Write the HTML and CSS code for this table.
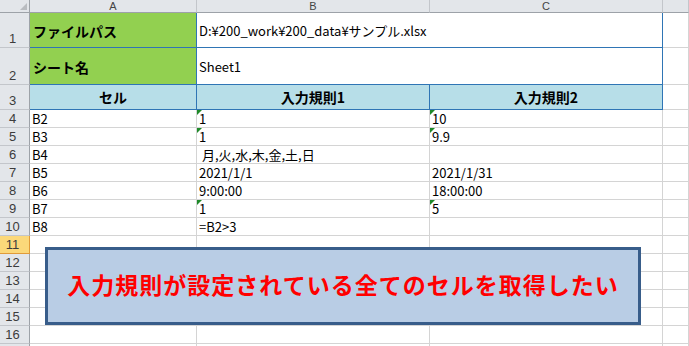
FILE: index.html
```html
<!DOCTYPE html>
<html lang="ja">
<head>
<meta charset="utf-8">
<title>入力規則</title>
<link rel="stylesheet" href="styles.css">
</head>
<body>
<div class="sheet">
  <div class="ch corner"></div><div class="ch">A</div><div class="ch">B</div><div class="ch">C</div><div class="ch"></div>

  <div class="rh">1</div><div class="c lab">ファイルパス</div><div class="c val span2">D:¥200_work¥200_data¥サンプル.xlsx</div><div class="c"></div>

  <div class="rh">2</div><div class="c lab">シート名</div><div class="c val span2">Sheet1</div><div class="c"></div>

  <div class="rh">3</div><div class="c th">セル</div><div class="c th">入力規則1</div><div class="c th">入力規則2</div><div class="c"></div>

  <div class="rh">4</div><div class="c">B2</div><div class="c flag">1</div><div class="c flag">10</div><div class="c"></div>
  <div class="rh">5</div><div class="c">B3</div><div class="c flag">1</div><div class="c flag">9.9</div><div class="c"></div>
  <div class="rh">6</div><div class="c">B4</div><div class="c indent">月,火,水,木,金,土,日</div><div class="c"></div><div class="c"></div>
  <div class="rh">7</div><div class="c">B5</div><div class="c">2021/1/1</div><div class="c">2021/1/31</div><div class="c"></div>
  <div class="rh">8</div><div class="c">B6</div><div class="c">9:00:00</div><div class="c">18:00:00</div><div class="c"></div>
  <div class="rh">9</div><div class="c">B7</div><div class="c flag">1</div><div class="c flag">5</div><div class="c"></div>
  <div class="rh">10</div><div class="c">B8</div><div class="c">=B2&gt;3</div><div class="c"></div><div class="c"></div>
  <div class="rh sel">11</div><div class="c"></div><div class="c"></div><div class="c"></div><div class="c"></div>
  <div class="rh">12</div><div class="c"></div><div class="c"></div><div class="c"></div><div class="c"></div>
  <div class="rh">13</div><div class="c"></div><div class="c"></div><div class="c"></div><div class="c"></div>
  <div class="rh">14</div><div class="c"></div><div class="c"></div><div class="c"></div><div class="c"></div>
  <div class="rh">15</div><div class="c"></div><div class="c"></div><div class="c"></div><div class="c"></div>
  <div class="rh">16</div><div class="c"></div><div class="c"></div><div class="c"></div><div class="c"></div>
  <div class="rh"></div><div class="c"></div><div class="c"></div><div class="c"></div><div class="c"></div>

  <div class="callout">入力規則が設定されている全てのセルを取得したい</div>
</div>
</body>
</html>
```
FILE: styles.css
```css
* { box-sizing: border-box; }
html, body { margin: 0; padding: 0; background: #fff; overflow: hidden; }
body { width: 689px; height: 346px; }

.sheet {
  position: relative;
  display: grid;
  grid-template-columns: 30px 167px 233px 233px 26px;
  grid-template-rows: 13px 35px 37px 25px repeat(14, 18px);
  font-family: "Noto Sans CJK JP", "Liberation Sans", sans-serif;
  font-size: 13px;
  line-height: 16px;
  color: #000;
}

.ch {
  background: #e3e6ea;
  border-right: 1px solid #c3c6cb;
  border-bottom: 1px solid #9da2a8;
  display: flex;
  align-items: center;
  justify-content: center;
  font-family: "Liberation Sans", sans-serif;
  font-size: 11px;
  line-height: 12px;
  color: #444;
}
.corner { position: relative; border-right-color: #9da2a8; }
.corner::after {
  content: "";
  position: absolute;
  right: 2px;
  bottom: 2px;
  border-left: 7px solid transparent;
  border-bottom: 7px solid #b9bcc0;
}

.rh {
  background: #e3e6ea;
  border-right: 1px solid #9da2a8;
  border-bottom: 1px solid #c3c6cb;
  display: flex;
  align-items: flex-end;
  justify-content: center;
  padding-right: 4px;
  padding-bottom: 1px;
  font-family: "Liberation Sans", sans-serif;
  font-size: 13px;
  line-height: 15px;
  color: #3c3c3c;
}
.rh.sel {
  background: #fbd87a;
  border-right-color: #e09b3a;
  border-bottom-color: #e09b3a;
}

.c {
  position: relative;
  border-right: 1px solid #d4d4d4;
  border-bottom: 1px solid #d4d4d4;
  display: flex;
  align-items: flex-end;
  padding-left: 2px;
  white-space: nowrap;
  overflow: hidden;
}
.indent { padding-left: 5px; }

.lab {
  background: #92d050;
  border-right-color: #2f75b5;
  border-bottom-color: #2f75b5;
  align-items: center;
  padding-left: 3px;
  padding-top: 1px;
  font-weight: bold;
  font-size: 14px;
}
.val {
  align-items: center;
  padding-top: 2px;
  border-right-color: #2f75b5;
  border-bottom-color: #2f75b5;
}
.span2 { grid-column: span 2; }

.th {
  background: #b7dee8;
  border-right-color: #2f75b5;
  border-bottom-color: #2f75b5;
  align-items: center;
  justify-content: center;
  padding-left: 0;
  font-weight: bold;
  font-size: 14px;
}

.flag::before {
  content: "";
  position: absolute;
  top: 0;
  left: 0;
  border-top: 5px solid #1f8a2a;
  border-right: 5px solid transparent;
}

.callout {
  position: absolute;
  left: 45px;
  top: 247px;
  width: 596px;
  height: 78px;
  background: #b9cde5;
  border: 3px solid #385d8a;
  display: flex;
  align-items: center;
  justify-content: center;
  padding-bottom: 4px;
  color: #ff0000;
  font-weight: bold;
  font-size: 23px;
  letter-spacing: 1px;
  line-height: 30px;
}
```
